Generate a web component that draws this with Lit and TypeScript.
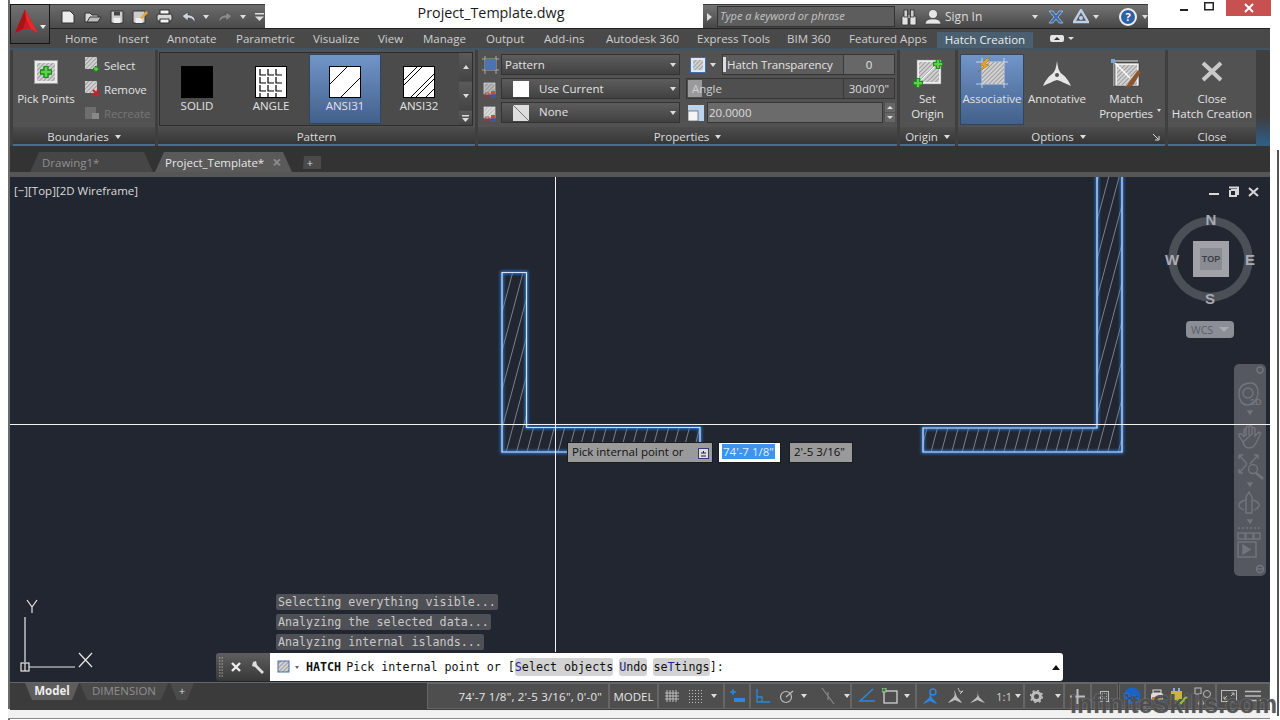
import { LitElement, html, svg, css, unsafeCSS } from "lit";
import { customElement } from "lit/decorators.js";

const FONT = unsafeCSS(`"Open Sans", "Liberation Sans", sans-serif`);
const MONO = unsafeCSS(`"DejaVu Sans Mono", "Liberation Mono", monospace`);

const TABS = [
  { label: "Home", w: 53 },
  { label: "Insert", w: 49 },
  { label: "Annotate", w: 69 },
  { label: "Parametric", w: 77 },
  { label: "Visualize", w: 65 },
  { label: "View", w: 45 },
  { label: "Manage", w: 63 },
  { label: "Output", w: 58 },
  { label: "Add-ins", w: 62 },
  { label: "Autodesk 360", w: 91 },
  { label: "Express Tools", w: 90 },
  { label: "BIM 360", w: 62 },
  { label: "Featured Apps", w: 88 },
];

// hatch lines at 75deg, clipped to the outline they belong to
function hatchLines(x0: number, x1: number, y0: number, y1: number) {
  const lines = [];
  const rise = y1 - y0;
  const run = rise * 0.268;
  for (let x = x0 - run - 10; x < x1; x += 10.4) {
    lines.push(svg`<line x1=${x} y1=${y1} x2=${x + run} y2=${y0}></line>`);
  }
  return lines;
}

const hatchSq = (x: number, y: number, s: number) =>
  svg`<rect x=${x} y=${y} width=${s} height=${s} fill="url(#hp)"></rect>`;

const plus = (x: number, y: number, r: number) => svg`
  <path d="M${x - r} ${y}H${x + r}M${x} ${y - r}V${y + r}" stroke="#1c8a1c" stroke-width=${r * 0.9} fill="none"></path>
  <path d="M${x - r + 1} ${y}H${x + r - 1}M${x} ${y - r + 1}V${y + r - 1}" stroke="#5fd04a" stroke-width=${r * 0.45} fill="none"></path>`;

const ANNOTATIVE = svg`<path d="M15 1C16 8 17 12 20 14C23 16 27 21 29 26C24 24 19 21 15 20C11 21 6 24 1 26C3 21 7 16 10 14C13 12 14 8 15 1Z"></path><circle cx="15" cy="15" r="2" fill="#525252"></circle>`;

@customElement("app-root")
export class AppRoot extends LitElement {
  static styles = css`
    :host {
      display: block;
      width: 1280px;
      height: 720px;
      overflow: hidden;
      font-family: ${FONT};
    }
    svg { display: block; flex: none; }
    .defs { position: absolute; width: 0; height: 0; }
    .frame {
      position: relative;
      width: 1280px;
      height: 720px;
      box-sizing: border-box;
      padding: 0 10px 10px 10px;
      background: #fff;
      display: flex;
      flex-direction: column;
    }
    .frame::before {
      content: "";
      position: absolute;
      left: 8px; top: 0; bottom: 0;
      width: 2px;
      background: #6a6a6a;
    }
    .frame::after {
      content: "";
      position: absolute;
      left: 8px; right: 10px; bottom: 1px;
      height: 9px;
      background: #f1f1f1;
      border-bottom: 1px solid #888;
    }
    .caret {
      flex: none;
      width: 0; height: 0;
      border-left: 3.5px solid transparent;
      border-right: 3.5px solid transparent;
      border-top: 4px solid #ddd;
    }

    /* title bar */
    .titlebar { display: flex; height: 28px; flex: none; }
    .qat {
      margin-top: 4px;
      width: 255px;
      box-sizing: border-box;
      padding-left: 50px;
      display: flex;
      align-items: center;
      background: linear-gradient(#6b6b6b, #4b4b4b);
      border-top: 1px solid #3a3a3a;
    }
    .doc-title {
      width: 438px;
      padding-left: 14px;
      box-sizing: border-box;
      text-align: center;
      font-size: 14.3px;
      line-height: 26px;
      color: #1a1a1a;
    }
    .info {
      margin-top: 4px;
      width: 445px;
      height: 24px;
      display: flex;
      align-items: center;
      background: linear-gradient(#737373, #474747);
      border-top: 1px solid #3a3a3a;
      box-sizing: border-box;
      color: #ddd;
      font-size: 12px;
    }
    .search {
      width: 180px;
      height: 21px;
      margin-left: 1px;
      box-sizing: border-box;
      background: #5d5d5d;
      border: 1px solid #333;
      color: #c4c4c4;
      font-style: italic;
      font-size: 11px;
      line-height: 17px;
      padding-left: 2px;
    }
    .help-q { position: relative; width: 18px; height: 18px; margin-left: 20px; border-radius: 50%; background: #2e62a8; border: 2px solid #f0f0f0; box-sizing: border-box; color: #fff; font-weight: 700; font-size: 11px; line-height: 14px; text-align: center; flex: none; }
    .winctl { flex: 1; display: flex; justify-content: flex-end; height: 16px; }
    .win-btn { width: 25px; height: 16px; display: flex; align-items: center; justify-content: center; }
    .win-close { width: 45px; background: #c75050; margin-left: 5px; margin-right: -1px; }
    .app-btn {
      position: absolute;
      left: 10px; top: 4px;
      width: 40px; height: 40px;
      box-sizing: border-box;
      background: linear-gradient(#707070, #484848);
      border: 1px solid #161616;
    }
    .app-btn .caret { position: absolute; right: 3px; top: 20px; border-top-color: #eee; }

    /* ribbon tabs */
    .tabs {
      height: 20px;
      flex: none;
      background: #494949;
      display: flex;
      padding-left: 55px;
      align-items: center;
      color: #cfcfcf;
      font-size: 11.5px;
      border-top: 1px solid #222;
      box-sizing: border-box;
    }
    .tab { flex: none; white-space: nowrap; }
    .tab-active {
      flex: none;
      width: 96px;
      height: 16px;
      line-height: 15px;
      align-self: flex-end;
      text-align: center;
      color: #eee;
      background: #4a5f6f;
    }
    .tab-min { margin-left: 17px; display: flex; align-items: center; gap: 4px; }

    /* ribbon */
    .ribbon {
      height: 98px;
      flex: none;
      box-sizing: border-box;
      background: #3f3f3f;
      border-top: 2px solid #3f5566;
      display: flex;
      padding-left: 3px;
      gap: 3px;
      color: #e2e2e2;
      font-size: 11.5px;
    }
    .panel { display: flex; flex-direction: column; border-bottom: 2px solid #44708c; height: 94px; flex: none; }
    .panel-body { height: 77px; background: #525252; position: relative; display: flex; box-sizing: border-box; flex: none; }
    .panel-title {
      height: 17px;
      padding-top: 2px;
      box-sizing: border-box;
      background: linear-gradient(#4d4d4d, #363636);
      text-align: center;
      color: #dcdcdc;
      display: flex;
      justify-content: center;
      align-items: center;
      gap: 6px;
      line-height: 15px;
    }
    .w-bound { width: 142px; }
    .w-pattern { width: 317px; }
    .w-props { width: 419px; }
    .w-origin { width: 55px; }
    .w-options { width: 207px; position: relative; }
    .w-close { width: 88px; }
    .launcher { position: absolute; right: 5px; bottom: 3px; }
    .corner { flex: 1; background: linear-gradient(#3f3f3f, #3f3f3f 70%, #2d5f8a); margin-left: -3px; }

    .big { display: flex; flex-direction: column; align-items: center; text-align: center; line-height: 15px; flex: none; box-sizing: border-box; padding-top: 8px; height: 76px; }
    .big svg { margin-bottom: 3px; }
    .big.pick { width: 66px; padding-top: 10px; margin-right: 5px; }
    .big.pick svg { margin-bottom: 7px; }
    .small-col { display: flex; flex-direction: column; padding-top: 8px; gap: 10px; }
    .small { display: flex; align-items: center; gap: 4px; height: 14px; letter-spacing: -0.1px; line-height: 13px; }
    .dim { color: #777; }

    .gallery {
      margin: 2px 2px 1px 1px;
      flex: 1;
      display: flex;
      border: 1px solid #2c2c2c;
      background: #4b4b4b;
    }
    .g-item {
      width: 74px;
      box-sizing: border-box;
      padding-top: 13px;
      display: flex;
      flex-direction: column;
      align-items: center;
      line-height: 15px;
      font-size: 11.5px;
    }
    .g-item.sel {
      background: linear-gradient(#7295c8, #42608b);
      border: 1px solid #2e4660;
      margin: 1px;
      width: 72px;
      padding-top: 11px;
    }
    .g-scroll { margin-left: 3px; width: 13px; display: flex; flex-direction: column; gap: 1px; }
    .g-btn { flex: 28; background: linear-gradient(#5a5a5a, #444); display: flex; align-items: center; justify-content: center; }
    .g-btn.last { flex: 14; }
    .up { border-top: 0; border-bottom: 4px solid #ddd; }

    .p-col1 { width: 198px; margin-left: 4px; padding-top: 4px; display: flex; flex-direction: column; gap: 3px; }
    .p-col2 { width: 209px; margin-left: 6px; padding-top: 4px; display: flex; flex-direction: column; gap: 3px; }
    .p-row { height: 21px; display: flex; align-items: center; line-height: 15px; }
    .drop {
      margin-left: 2px;
      width: 179px;
      height: 21px;
      box-sizing: border-box;
      background: linear-gradient(#5d5d5d, #414141);
      border: 1px solid #333;
      display: flex;
      align-items: center;
      padding: 0 3px;
    }
    .drop .lbl { flex: 1; padding-bottom: 1px; }
    .swatch { width: 16px; height: 16px; margin: 0 10px 0 8px; background: #fff; flex: none; }
    .swatch.none { background: linear-gradient(135deg, #ddd 49%, #777 50%, #777 52%, #ddd 53%); transform: scaleX(-1); }
    .field {
      height: 21px;
      box-sizing: border-box;
      background: #5c5c5c;
      border: 1px solid #363636;
      display: flex;
      align-items: center;
      position: relative;
    }
    .field .val { border-left: 1px solid #3b3b3b; height: 100%; display: flex; align-items: center; justify-content: center; background: #676767; }
    .f-trans { width: 173px; letter-spacing: -0.1px; }
    .handle { width: 3px; height: 15px; background: #ddd; margin: 0 1px 0 0; flex: none; }
    .f-angle { width: 209px; background: #4f4f4f; }
    .angle-handle { position: absolute; left: 1px; top: 1px; bottom: 1px; width: 14px; background: #9a9a9a; }
    .angle-text { position: relative; margin-left: 5px; color: #cfcfcf; }
    .f-scale { width: 176px; margin-left: 3px; background: #6b6b6b; padding-left: 1px; color: #ddd; }
    .spin { width: 10px; margin-left: 2px; display: flex; flex-direction: column; gap: 1px; }
    .spin div { height: 9px; background: #666; display: flex; align-items: center; justify-content: center; }
    .spin .caret { border-left-width: 3px; border-right-width: 3px; border-top-width: 3px; height: 0; background: none; }
    .spin .up { border-bottom-width: 3px; }
    .assoc {
      width: 64px;
      height: 71px;
      margin: 4px 0 0 2px;
      box-sizing: border-box;
      background: linear-gradient(#7295c8, #42608b);
      border: 1px solid #2e4660;
      padding-top: 3px !important;
      white-space: nowrap;
    }
    .big.anno { width: 66px; padding-top: 10px; }
    .big.match { width: 74px; margin-left: -1px; }
    .big.closeb { width: 88px; padding-top: 10px; }
    .big.closeb svg { margin-bottom: 7px; }
    .big.origin { width: 55px; }
    .match-lbl { position: relative; letter-spacing: -0.2px; }
    .tiny { position: absolute; right: -8px; top: 3px; border-left-width: 2.5px; border-right-width: 2.5px; border-top-width: 3px; }

    /* file tabs */
    .filetabs {
      height: 26px;
      flex: none;
      background: #333;
      display: flex;
      align-items: flex-end;
      padding-left: 20px;
      box-sizing: border-box;
      font-size: 11.5px;
    }
    .ftab {
      height: 20px;
      display: flex;
      align-items: center;
      flex: none;
      box-sizing: border-box;
      clip-path: polygon(9px 0, calc(100% - 9px) 0, 100% 100%, 0 100%);
      line-height: 15px;
    }
    .ftab.off { width: 123px; background: #464646; color: #8f8f8f; padding-left: 12px; margin-right: 2px; }
    .ftab.on { width: 137px; background: #5a5a5a; color: #e6e6e6; padding-left: 10px; gap: 8px; }
    .ftab-x { color: #8c8c8c; font-size: 16px; font-weight: 700; }
    .ftab.add { width: 22px; height: 13px; margin: 0 0 3px 7px; background: #4a4a4a; color: #ddd; justify-content: center; font-size: 11px; clip-path: polygon(5px 0, 100% 0, 100% 100%, 4px 100%); }
    .filetabs-end { height: 5px; flex: none; background: #565656; }

    /* canvas */
    .canvas { position: relative; height: 505px; flex: none; background: #212630; }
    .canvas > svg { position: absolute; left: 0; top: 0; }
    .vp-label { position: absolute; left: 4px; top: 6px; font-size: 11.5px; color: #dcdcdc; }
    .wcs {
      position: absolute;
      left: 1176px; top: 144px;
      width: 48px; height: 17px;
      box-sizing: border-box;
      border-radius: 4px;
      background: #8b8e95;
      color: #5c5f66;
      font-size: 10.5px;
      display: flex;
      align-items: center;
      padding-left: 5px;
      gap: 6px;
    }
    .wcs .caret { border-top-color: #a9abb0; border-left-width: 5px; border-right-width: 5px; border-top-width: 5px; }
    .navbar {
      position: absolute;
      left: 1224px; top: 187px;
      width: 32px; height: 212px;
      border-radius: 5px;
      background: #55585f;
    }
    .tip {
      position: absolute;
      top: 265px;
      height: 21px;
      box-sizing: border-box;
      border: 1px solid #1c1c1c;
      background: #9a9a9a;
      color: #111;
      font-size: 11.5px;
      display: flex;
      align-items: center;
      padding: 0 0 3px 4px;
      line-height: 15px;
    }
    .tip-prompt { left: 557px; width: 146px; }
    .tip-x { left: 708px; width: 63px; background: #fff; padding-left: 3px; }
    .tip-x span { background: #3d93ee; color: #dfeeff; padding: 0 1px; }
    .tip-y { left: 779px; width: 64px; }
    .tip-more { position: absolute; right: 3px; top: 5px; }
    .msg {
      position: absolute;
      left: 266px;
      height: 16px;
      padding: 0 2px;
      border-radius: 2px;
      background: #4e5056;
      color: #c9c9c9;
      font: 11.68px/16px ${MONO};
      white-space: pre;
    }
    .cmd {
      position: absolute;
      left: 206px; top: 476px;
      width: 847px; height: 28px;
      display: flex;
      border-radius: 3px;
      overflow: hidden;
    }
    .cmd-left {
      width: 54px;
      flex: none;
      background: linear-gradient(#5e5e5e, #383838);
      display: flex;
      align-items: center;
      padding-left: 3px;
      box-sizing: border-box;
    }
    .cmd-x { margin-left: 8px; }
    .cmd-wrench { margin-left: 10px; }
    .cmd-main {
      flex: 1;
      background: #fff;
      display: flex;
      align-items: center;
      padding-left: 7px;
      font: 11.68px ${MONO};
      color: #111;
      white-space: pre;
    }
    .cmd-main b { margin-right: -2px; }
    .opt { background: #d3d3d3; border-radius: 3px; padding: 2px 0; }
    .opt + .opt { margin-left: -1px; }
    .opt i { font-style: normal; color: #24248a; }
    .cmd-up { margin-left: auto; margin-right: 3px; border-top: 0; border-bottom: 5px solid #111; border-left-width: 4px; border-right-width: 4px; }

    /* status bar */
    .status {
      height: 28px;
      flex: none;
      background: #3b3b3b;
      display: flex;
      box-sizing: border-box;
      border-top: 1px solid #666;
      position: relative;
      z-index: 1;
    }
    .layouts { width: 417px; display: flex; padding-left: 15px; align-items: flex-start; font-size: 11.5px; flex: none; box-sizing: border-box; }
    .ltab { height: 17px; line-height: 16px; flex: none; text-align: center; clip-path: polygon(0 0, 100% 0, calc(100% - 7px) 100%, 7px 100%); }
    .ltab.on { width: 54px; background: #5d5d5d; font-weight: 700; color: #eee; }
    .ltab.off { width: 88px; background: #4a4a4a; color: #8f8f8f; margin-left: 1px; }
    .ltab.add { width: 24px; background: #4a4a4a; color: #ddd; margin-left: 2px; }
    .cell {
      height: 26px;
      box-sizing: border-box;
      background: #4e4e4e;
      border: 1px solid #666;
      color: #e6e6e6;
      font-size: 11.5px;
      display: flex;
      align-items: center;
      justify-content: center;
      gap: 5px;
      flex: none;
    }
    .coords { width: 182px; justify-content: flex-end; padding-right: 6px; letter-spacing: 0.2px; }
    .watermark {
      position: absolute;
      left: 1070px; top: 690px;
      font: 700 25.2px "Liberation Sans", sans-serif;
      color: rgba(66, 66, 66, 0.85);
      text-shadow: 0 0 2px rgba(190, 190, 190, 0.6);
      white-space: nowrap;
      z-index: 2;
    }
    .edge { position: absolute; left: 1277px; top: 150px; bottom: 4px; width: 2px; background: #555; }
  `;

  render() {
    return html`
      <svg class="defs">
        <defs>
          <pattern id="hp" width="3" height="3" patternUnits="userSpaceOnUse" patternTransform="rotate(45)">
            <rect width="3" height="3" fill="#d2d2d2"></rect>
            <rect width="1" height="3" fill="#9c9c9c"></rect>
          </pattern>
        </defs>
      </svg>
      <div class="frame">
        ${this.titleBar()} ${this.tabsRow()} ${this.ribbon()} ${this.fileTabs()} ${this.canvas()} ${this.statusBar()}
        <div class="edge"></div>
        <div class="watermark">InfiniteSkills.com</div>
      </div>
    `;
  }

  titleBar() {
    const fold = "#d8d8d8";
    return html`
      <div class="titlebar">
        <div class="qat">
          <svg width="16" height="14" style="margin-right:8px"><path d="M2 1H10L14 5V13H2Z" fill="#ececec" stroke="#333"></path></svg>
          <svg width="18" height="14" style="margin-right:8px"><path d="M1 3H6L8 5H14V12H1Z" fill=${fold} stroke="#333"></path><path d="M3 12L6 7H17L14 12Z" fill="#bbb" stroke="#333"></path></svg>
          <svg width="14" height="14" style="margin-right:8px"><path d="M1 1H13V13H1Z" fill="#ccc" stroke="#333"></path><rect x="4" y="1.5" width="6" height="4" fill="#444"></rect><rect x="3.5" y="8" width="7" height="5" fill="#eee"></rect></svg>
          <svg width="16" height="14" style="margin-right:8px"><path d="M1 1H13V13H1Z" fill="#ccc" stroke="#333"></path><rect x="3.5" y="8" width="7" height="5" fill="#eee"></rect><path d="M8 8L14 1L16 3L10 9Z" fill="#e2a93a"></path></svg>
          <svg width="17" height="15" style="margin-right:8px"><rect x="1" y="5" width="15" height="7" rx="2" fill="#d8d8d8" stroke="#333"></rect><rect x="4" y="1" width="9" height="4" fill="#f3f3f3" stroke="#333"></rect><rect x="4" y="10" width="9" height="4" fill="#f3f3f3" stroke="#333"></rect></svg>
          <svg width="15" height="12"><path d="M1 5L7 1V4C11 4 14 6 14 10L13 11C12 8 10 7 7 7V10Z" fill="#cfd3da" stroke="#333" stroke-width=".6"></path></svg>
          <div class="caret" style="margin:0 9px 0 7px"></div>
          <svg width="15" height="12"><path d="M14 5L8 1V4C4 4 1 6 1 10L2 11C3 8 5 7 8 7V10Z" fill="#8a8a8a" stroke="#444" stroke-width=".6"></path></svg>
          <div class="caret" style="margin:0 9px 0 7px"></div>
          <svg width="9" height="8"><path d="M0 0H9V1.5H0ZM0 3.5H9L4.5 8Z" fill="#ddd"></path></svg>
        </div>
        <div class="doc-title">Project_Template.dwg</div>
        <div class="info">
          <svg width="13" height="22" style="flex:none"><path d="M4 7L9 11L4 15Z" fill="#ddd"></path></svg>
          <div class="search">Type a keyword or phrase</div>
          <svg width="18" height="18" style="margin-left:5px">
            <rect x="2" y="8" width="6" height="9" rx="1.5" fill="#e2e2e2" stroke="#222" stroke-width=".7"></rect>
            <rect x="10" y="8" width="6" height="9" rx="1.5" fill="#e2e2e2" stroke="#222" stroke-width=".7"></rect>
            <rect x="4" y="2" width="3.5" height="7" fill="#cfcfcf" stroke="#222" stroke-width=".7"></rect>
            <rect x="10.5" y="2" width="3.5" height="7" fill="#cfcfcf" stroke="#222" stroke-width=".7"></rect>
            <rect x="8" y="7" width="2" height="3" fill="#999"></rect>
          </svg>
          <svg width="20" height="18" style="margin-left:5px"><circle cx="10" cy="6" r="4.5" fill="#e6e6e6" stroke="#333" stroke-width=".6"></circle><path d="M2 16C3 11 7 11 10 11C13 11 17 11 18 16Z" fill="#e6e6e6" stroke="#333" stroke-width=".6"></path></svg>
          <span style="margin-left:2px;width:87px;flex:none">Sign In</span>
          <div class="caret"></div>
          <svg width="16" height="14" style="margin-left:10px"><path d="M1 1H5L8 5L11 1H15L10 7L15 13H11L8 9L5 13H1L6 7Z" fill="#3d6fb0" stroke="#b8cbe3" stroke-width=".7"></path></svg>
          <svg width="16" height="15" style="margin-left:9px"><path d="M8 1L15 13H1Z" fill="none" stroke="#bcd0ea" stroke-width="2.4"></path><circle cx="8" cy="9" r="2" fill="#bcd0ea"></circle></svg>
          <div class="caret" style="margin-left:4px"></div>
          <div class="help-q">?</div>
          <div class="caret" style="margin-left:5px"></div>
        </div>
        <div class="winctl">
          <div class="win-btn"><svg width="8" height="8"><rect y="5" width="8" height="2" fill="#222"></rect></svg></div>
          <div class="win-btn"><svg width="14" height="12"><rect x="2.75" y=".75" width="8.5" height="7" fill="none" stroke="#222" stroke-width="1.5"></rect></svg></div>
          <div class="win-btn win-close"><svg width="10" height="10"><path d="M1 1L9 9M9 1L1 9" stroke="#fff" stroke-width="2"></path></svg></div>
        </div>
      </div>
      <div class="app-btn">
        <svg width="38" height="38">
          <path d="M14 4.5L27 28L20 24H12L4 28Z" fill="#cc1a20"></path>
          <path d="M14 4.5L4 28L12 24L15 14Z" fill="#a81318"></path>
          <path d="M14 4.5L15 14L20 24L27 28Z" fill="#e52a2e"></path>
        </svg>
        <div class="caret"></div>
      </div>
    `;
  }

  tabsRow() {
    return html`
      <div class="tabs">
        ${TABS.map((t) => html`<div class="tab" style="width:${t.w}px">${t.label}</div>`)}
        <div class="tab-active">Hatch Creation</div>
        <div class="tab-min">
          <svg width="14" height="7"><rect width="14" height="7" rx="2" fill="#e4e4e4"></rect><path d="M4 5H10L7 2Z" fill="#333"></path></svg>
          <div class="caret" style="border-left-width:3px;border-right-width:3px;border-top-width:3px"></div>
        </div>
      </div>
    `;
  }

  ribbon() {
    return html`
      <div class="ribbon">
        ${this.boundaries()} ${this.pattern()} ${this.properties()} ${this.origin()} ${this.options()} ${this.closePanel()}
        <div class="corner"></div>
      </div>
    `;
  }

  boundaries() {
    return html`
      <div class="panel w-bound">
        <div class="panel-body">
          <div class="big pick">
            <svg width="24" height="24"><rect x=".5" y=".5" width="23" height="23" fill="#ececec" stroke="#999"></rect>${hatchSq(3, 3, 18)}${plus(12, 12, 6)}</svg>
            Pick Points
          </div>
          <div class="small-col">
            <div class="small"><svg width="16" height="16">${hatchSq(1, 0, 12)}${plus(12, 12, 3)}</svg>Select</div>
            <div class="small"><svg width="16" height="16">${hatchSq(1, 0, 12)}<path d="M9 9L15 15M15 9L9 15" stroke="#c22" stroke-width="2"></path></svg>Remove</div>
            <div class="small dim"><svg width="16" height="16"><rect x="1" y="2" width="11" height="12" fill="#6e6e6e"></rect><rect x="8" y="8" width="7" height="6" fill="#888"></rect></svg>Recreate</div>
          </div>
        </div>
        <div class="panel-title">Boundaries <div class="caret"></div></div>
      </div>
    `;
  }

  pattern() {
    return html`
      <div class="panel w-pattern">
        <div class="panel-body">
          <div class="gallery">
            <div class="g-item"><svg width="32" height="32"><rect width="32" height="32" fill="#000"></rect></svg>SOLID</div>
            <div class="g-item">
              <svg width="32" height="32">
                <rect x=".5" y=".5" width="31" height="31" fill="#fff" stroke="#000"></rect>
                <path d="M5 3V9H11M13 3V9H19M21 3V9H27M5 11V17H11M13 11V17H19M21 11V17H27M5 19V25H11M13 19V25H19M21 19V25H27M5 27V31M13 27V31M21 27V31" fill="none" stroke="#000" stroke-width="1.2"></path>
              </svg>
              ANGLE
            </div>
            <div class="g-item sel">
              <svg width="32" height="32">
                <rect x=".5" y=".5" width="31" height="31" fill="#fff" stroke="#000"></rect>
                <path d="M1 18L18 1M12 31L31 12" stroke="#000" stroke-width="1"></path>
              </svg>
              ANSI31
            </div>
            <div class="g-item">
              <svg width="32" height="32">
                <rect x=".5" y=".5" width="31" height="31" fill="#fff" stroke="#000"></rect>
                <path d="M1 14L14 1M1 19L19 1M8 31L31 8M13 31L31 13M23 31L31 23" stroke="#000" stroke-width="1"></path>
              </svg>
              ANSI32
            </div>
            <div class="g-scroll">
              <div class="g-btn"><div class="caret up"></div></div>
              <div class="g-btn"><div class="caret"></div></div>
              <div class="g-btn last"><svg width="7" height="7"><path d="M0 0H7V1.5H0ZM0 3H7L3.5 7Z" fill="#ddd"></path></svg></div>
            </div>
          </div>
        </div>
        <div class="panel-title">Pattern</div>
      </div>
    `;
  }

  propIcon(c: string) {
    return html`<svg width="16" height="18">
      ${hatchSq(2, 3, 11)}
      <rect x="2" y="3" width="11" height="11" fill=${c} fill-opacity=".35" stroke="#ddd" stroke-width=".7"></rect>
      <rect x="9" y="11" width="4" height="4" fill="#c0532b"></rect>
      <rect x="3" y="13" width="4" height="4" fill="none" stroke="#a33" stroke-width=".8"></rect>
      <rect x="9" y="14" width="4" height="3" fill="none" stroke="#36c" stroke-width=".8"></rect>
    </svg>`;
  }

  properties() {
    return html`
      <div class="panel w-props">
        <div class="panel-body">
          <div class="p-col1">
            <div class="p-row">
              <svg width="17" height="18"><path d="M3 0V18M14 0V18M0 3H17M0 14H17" stroke="#ccc" stroke-width=".7"></path><rect x="3" y="3" width="11" height="11" fill="#4d74ad"></rect></svg>
              <div class="drop"><span class="lbl">Pattern</span><div class="caret"></div></div>
            </div>
            <div class="p-row">
              ${this.propIcon("#888")}
              <div class="drop" style="margin-left:3px"><div class="swatch"></div><span class="lbl">Use Current</span><div class="caret"></div></div>
            </div>
            <div class="p-row">
              ${this.propIcon("#eee")}
              <div class="drop" style="margin-left:3px"><div class="swatch none"></div><span class="lbl" style="padding-bottom:2px">None</span><div class="caret"></div></div>
            </div>
          </div>
          <div class="p-col2">
            <div class="p-row">
              <svg width="16" height="16" style="margin-left:4px"><rect x=".5" y=".5" width="15" height="15" fill="#dfe8f5" stroke="#3a6fb5"></rect>${hatchSq(3, 3, 10)}</svg>
              <div class="caret" style="margin:0 6px 0 4px;border-left-width:3px;border-right-width:3px"></div>
              <div class="field f-trans"><div class="handle"></div><span style="flex:1">Hatch Transparency</span><div class="val" style="width:50px">0</div></div>
            </div>
            <div class="p-row">
              <div class="field f-angle">
                <div class="angle-handle"></div>
                <span class="angle-text" style="flex:1">Angle</span>
                <div class="val" style="width:50px;background:#4f4f4f;color:#ddd">30d0'0"</div>
              </div>
            </div>
            <div class="p-row">
              <svg width="16" height="16" style="margin-left:2px"><rect width="16" height="16" fill="#bcd4ee"></rect><rect x="0" y="6" width="10" height="10" fill="#f5f5f5" stroke="#3a3a3a" stroke-width=".6"></rect></svg>
              <div class="field f-scale">20.0000</div>
              <div class="spin"><div><div class="caret up"></div></div><div><div class="caret"></div></div></div>
            </div>
          </div>
        </div>
        <div class="panel-title">Properties <div class="caret"></div></div>
      </div>
    `;
  }

  origin() {
    return html`
      <div class="panel w-origin">
        <div class="panel-body">
          <div class="big origin">
            <svg width="32" height="30">
              <rect x="5" y="2" width="24" height="24" fill="#eee" stroke="#888" stroke-width=".5"></rect>
              ${hatchSq(7, 4, 20)}
              <path d="M7 24L26 5" stroke="#fff" stroke-width="1"></path>
              ${plus(26, 6, 5)}${plus(6, 25, 5)}
            </svg>
            <span>Set<br />Origin</span>
          </div>
        </div>
        <div class="panel-title">Origin <div class="caret"></div></div>
      </div>
    `;
  }

  options() {
    return html`
      <div class="panel w-options">
        <div class="panel-body">
          <div class="big assoc">
            <svg width="32" height="30">
              <path d="M6 0V30M28 0V30M0 4H32M0 26H32" stroke="#dce6f2" stroke-width=".8"></path>
              ${hatchSq(6, 4, 22)}
              <path d="M11 0L4 7L8 8L2 14L13 7L9 6L14 1Z" fill="#e8a52a" stroke="#7a5a18" stroke-width=".4"></path>
            </svg>
            Associative
          </div>
          <div class="big anno">
            <svg width="30" height="28" fill="#e6e6e6">${ANNOTATIVE}</svg>
            Annotative
          </div>
          <div class="big match">
            <svg width="32" height="30">
              <path d="M4 3H28M4 3V28" stroke="#ddd" stroke-width="1"></path>
              <rect x="1" y="1" width="4" height="4" fill="#7aa7dd"></rect>
              <rect x="5" y="5" width="24" height="23" fill="#f0f0f0" stroke="#333" stroke-width=".6"></rect>
              ${hatchSq(7, 7, 20)}
              <path d="M5 5L20 20" stroke="#fff" stroke-width="1.4"></path>
              <path d="M19 24L28 12L31 14L24 26C22 29 17 29 14 29C17 28 18 26 19 24Z" fill="#8a5630"></path>
            </svg>
            <span>Match</span>
            <span class="match-lbl">Properties<span class="caret tiny"></span></span>
          </div>
        </div>
        <div class="panel-title" style="padding-right:6px">Options <div class="caret"></div></div>
        <svg class="launcher" width="7" height="7"><path d="M0 0L5 5M6 2V6H2" fill="none" stroke="#ddd"></path></svg>
      </div>
    `;
  }

  closePanel() {
    return html`
      <div class="panel w-close">
        <div class="panel-body">
          <div class="big closeb">
            <svg width="24" height="24"><path d="M3 3L21 20M21 3L3 20" stroke="#c9c9c9" stroke-width="4"></path></svg>
            <span>Close<br />Hatch Creation</span>
          </div>
        </div>
        <div class="panel-title">Close</div>
      </div>
    `;
  }

  fileTabs() {
    return html`
      <div class="filetabs">
        <div class="ftab off">Drawing1*</div>
        <div class="ftab on">Project_Template* <span class="ftab-x">×</span></div>
        <div class="ftab add">+</div>
      </div>
      <div class="filetabs-end"></div>
    `;
  }

  canvas() {
    const L = "502,272.5 526.5,272.5 526.5,427.5 700,427.5 700,452 502,452";
    const R = "1097,170 1097,428 923,428 923,452 1122,452 1122,170";
    return html`
      <div class="canvas">
        <svg width="1260" height="505" viewBox="10 177 1260 505">
          <defs>
            <clipPath id="cl"><polygon points=${L}></polygon></clipPath>
            <clipPath id="cr"><polygon points=${R}></polygon></clipPath>
            <filter id="glow" x="-10%" y="-10%" width="120%" height="120%"><feGaussianBlur stdDeviation="1.4"></feGaussianBlur></filter>
          </defs>
          <g stroke="#868b95" stroke-width=".9">
            <g clip-path="url(#cl)">${hatchLines(502, 700, 272, 452)}</g>
            <g clip-path="url(#cr)">${hatchLines(923, 1122, 170, 452)}</g>
          </g>
          <g fill="none">
            <g stroke="#2f7be0" stroke-width="3" filter="url(#glow)">
              <polygon points=${L}></polygon>
              <polygon points=${R}></polygon>
            </g>
            <g stroke="#cfe3fb" stroke-width="1.2">
              <polygon points=${L}></polygon>
              <polygon points=${R}></polygon>
            </g>
          </g>
          <!-- ucs icon -->
          <g fill="none" stroke="#e8e8e8" stroke-width="1.2">
            <path d="M25 617V662M29 667H75"></path>
            <rect x="21" y="663" width="8" height="8"></rect>
            <path d="M25 663V671M79 653L92 667M92 653L79 667"></path>
            <path d="M27 600L32 607L37 600M32 607V613"></path>
          </g>
          <!-- view cube -->
          <circle cx="1210.5" cy="259" r="38" fill="none" stroke="#4b4f58" stroke-width="8.5"></circle>
          <rect x="1193" y="241" width="36" height="36" fill="#a0a2a8"></rect>
          <rect x="1200" y="248" width="22" height="22" fill="#8a8c93"></rect>
          <g font-family="Liberation Sans, sans-serif" font-weight="700" fill="#a8abb1" font-size="15" text-anchor="middle">
            <text x="1211" y="225">N</text>
            <text x="1210" y="304">S</text>
            <text x="1250" y="265">E</text>
            <text x="1172" y="265">W</text>
            <text x="1211" y="262" font-size="9" fill="#3e4149">TOP</text>
          </g>
          <!-- viewport controls -->
          <g fill="none" stroke="#d8d8d8" stroke-width="2">
            <path d="M1209 194H1219"></path>
            <path d="M1229 187.5H1238V195M1231 190H1236V196H1230V190"></path>
            <path d="M1249 188L1258 196M1258 188L1249 196"></path>
          </g>
        </svg>
        <div class="vp-label">[−][Top][2D Wireframe]</div>
        <div class="wcs">WCS <div class="caret"></div></div>
        <div class="navbar">${this.navIcons()}</div>
        <svg width="1260" height="505" viewBox="10 177 1260 505" style="pointer-events:none">
          <path d="M10 424.5H1270M555.5 177V652" stroke="#f2f2f2" stroke-width="1"></path>
        </svg>
        <div class="tip tip-prompt">Pick internal point or
          <svg class="tip-more" width="11" height="11"><rect x=".5" y=".5" width="10" height="10" fill="#ddd" stroke="#3a3a80"></rect><path d="M3 5H8M5.5 3V5M3 8H8" stroke="#222"></path></svg>
        </div>
        <div class="tip tip-x"><span>74'-7 1/8"</span></div>
        <div class="tip tip-y">2'-5 3/16"</div>
        <div class="msg" style="top:417px">Selecting everything visible...</div>
        <div class="msg" style="top:437px">Analyzing the selected data...</div>
        <div class="msg" style="top:457px">Analyzing internal islands...</div>
        <div class="cmd">
          <div class="cmd-left">
            <svg width="4" height="20"><path d="M0 1H4M0 4H4M0 7H4M0 10H4M0 13H4M0 16H4M0 19H4" stroke="#aaa" stroke-dasharray="1.5 1"></path></svg>
            <svg class="cmd-x" width="10" height="10"><path d="M1 1L9 9M9 1L1 9" stroke="#eee" stroke-width="2.4"></path></svg>
            <svg class="cmd-wrench" width="14" height="14"><path d="M2 2L5 1L6 5L13 12L11 14L4 7L1 6Z" fill="#ddd"></path></svg>
          </div>
          <div class="cmd-main">
            <svg width="14" height="14"><rect x="1" y="1" width="11" height="11" fill="url(#hp)" stroke="#4a6ca8"></rect></svg>
            <div class="caret" style="margin:0 7px 0 4px;border-top-color:#666;border-left-width:2.5px;border-right-width:2.5px;border-top-width:3px"></div>
            <span><b>HATCH</b> Pick internal point or [<span class="opt"><i>S</i>elect objects</span> <span class="opt"><i>U</i>ndo</span> <span class="opt">se<i>T</i>tings</span>]:</span>
            <div class="caret cmd-up"></div>
          </div>
        </div>
      </div>
    `;
  }

  navIcons() {
    return html`<svg width="32" height="212" fill="none" stroke="#72757c" stroke-width="1.4">
      <circle cx="26" cy="6" r="3"></circle>
      <path d="M5 30C5 22 10 19 17 19C22 19 24 24 24 28C24 36 19 41 13 41C8 41 5 36 5 30Z"></path>
      <circle cx="14" cy="29" r="5"></circle>
      <text x="16" y="41" font-family="Liberation Sans" font-size="9" font-weight="700" fill="#72757c" stroke="none">2D</text>
      <path d="M14 47H18L16 50Z" fill="#72757c"></path>
      <path d="M9 78C6 73 4 72 5 70C7 69 9 71 10 73V66C10 64 12 64 12 66V72M12 70V64C12 62 15 62 15 64V71M15 70V63C15 61 18 61 18 63V71M18 70V65C18 63 21 63 21 65V72L25 68C27 68 27 70 26 71L22 79C20 83 18 84 15 84C12 84 10 82 9 78Z"></path>
      <path d="M5 91L13 100M24 91L16 100M5 109L13 100M5 91H9M5 91V95M24 91H20M24 91V95M5 109H9M5 109V105"></path>
      <circle cx="19" cy="105" r="4.5"></circle><path d="M22 109L29 115" stroke-width="2.4"></path>
      <path d="M14 119H18L16 122Z" fill="#72757c"></path>
      <path d="M12 133L15 128L18 133M12 133V149H18V133"></path>
      <path d="M11 136C3 139 3 143 10 146M19 136C27 139 27 143 20 146"></path>
      <path d="M14 156H18L16 159Z" fill="#72757c"></path>
      <path d="M4 164H27" stroke-dasharray="2 2"></path>
      <rect x="4" y="169" width="7" height="6"></rect><rect x="12" y="169" width="7" height="6"></rect><rect x="20" y="169" width="6" height="6"></rect>
      <rect x="4" y="178" width="18" height="15"></rect><path d="M9 181L16 185.5L9 190Z" fill="#72757c"></path>
      <circle cx="26" cy="205" r="3.5"></circle><path d="M22.5 205H29.5"></path>
    </svg>`;
  }

  statusBar() {
    const blue = "#2f86e0";
    const grey = "#bdbdbd";
    return html`
      <div class="status">
        <div class="layouts">
          <div class="ltab on">Model</div>
          <div class="ltab off">DIMENSION</div>
          <div class="ltab add">+</div>
        </div>
        <div class="cell coords">74'-7 1/8", 2'-5 3/16", 0'-0"</div>
        <div class="cell" style="width:49px">MODEL</div>
        <div class="cell" style="width:66px;gap:9px">
          <svg width="14" height="14" stroke=${grey} stroke-width="1"><path d="M2 1V13M5 1V13M8 1V13M11 1V13M0 4H14M0 7H14M0 10H14"></path></svg>
          <svg width="14" height="14" fill=${grey}><path d="M1 1h1v1H1zM4 1h1v1H4zM7 1h1v1H7zM10 1h1v1h-1zM13 1h1v1h-1zM1 4h1v1H1zM4 4h1v1H4zM7 4h1v1H7zM10 4h1v1h-1zM13 4h1v1h-1zM1 7h1v1H1zM4 7h1v1H4zM7 7h1v1H7zM10 7h1v1h-1zM13 7h1v1h-1zM1 10h1v1H1zM4 10h1v1H4zM7 10h1v1H7zM10 10h1v1h-1zM13 10h1v1h-1zM1 13h1v1H1zM4 13h1v1H4zM7 13h1v1H7zM10 13h1v1h-1zM13 13h1v1h-1z"></path></svg>
          <div class="caret"></div>
        </div>
        <div class="cell" style="width:26px"><svg width="18" height="16"><path d="M5 1V7M2 4H8" stroke=${blue} stroke-width="1.5"></path><rect x="6" y="10" width="11" height="4" fill=${blue}></rect></svg></div>
        <div class="cell" style="width:101px;gap:7px;justify-content:flex-start;padding-left:4px">
          <svg width="16" height="16" fill="none" stroke=${blue} stroke-width="1.3"><path d="M2 1V14H15M2 9H7V14"></path></svg>
          <svg width="16" height="16" fill="none" stroke=${grey} stroke-width="1.2"><circle cx="8" cy="9" r="5.5"></circle><path d="M8 9L15 3"></path></svg>
          <div class="caret"></div>
          <svg width="18" height="18" fill="none" stroke="#888" stroke-width="1.2" style="margin-left:5px"><path d="M3 1L15 17M9 5V13"></path></svg>
          <div class="caret"></div>
        </div>
        <div class="cell" style="width:65px;gap:6px">
          <svg width="18" height="16" fill="none" stroke=${blue} stroke-width="1.5"><path d="M15 1L2 13H17"></path></svg>
          <svg width="16" height="16" fill="none" stroke="#ddd" stroke-width="1.2"><rect x="2" y="3" width="13" height="12"></rect><rect x="0" y="0" width="4" height="4" fill="#3e7b3e" stroke="#bfe8bf" stroke-width=".7"></rect></svg>
          <div class="caret"></div>
        </div>
        <div class="cell" style="width:108px;gap:5px;justify-content:flex-start;padding-left:4px">
          <svg width="20" height="18" fill=${blue}><path d="M8 4C9 8 9 10 7 12C5 14 3 15 2 17C5 16 7 15 9 14C11 15 13 16 16 17C15 15 13 13 11 11C10 9 10 7 8 4Z"></path><circle cx="12" cy="5" r="3" fill="none" stroke=${blue} stroke-width="1.4"></circle></svg>
          <svg width="18" height="18" fill=${grey}><path d="M8 3C9 7 9 9 7 11C5 13 3 14 2 16C5 15 7 14 9 13C11 14 13 15 16 16C15 14 13 12 11 10C10 8 10 6 8 3Z"></path><path d="M12 1L14 5L17 4L14 7" fill="none" stroke=${grey}></path></svg>
          <svg width="17" height="18" fill=${grey}><path d="M8 3C9 7 9 9 7 11C5 13 3 14 1 16C4 15 7 14 8.5 13C10 14 13 15 16 16C14 14 12 12 10 10C9 8 9 6 8 3Z"></path></svg>
          <span style="margin-left:5px;color:#ccc">1:1</span>
          <div class="caret" style="margin-left:-2px"></div>
        </div>
        <div class="cell" style="width:40px;justify-content:flex-start;padding-left:5px;gap:12px">
          <svg width="13" height="13"><circle cx="6.5" cy="6.5" r="4" fill="none" stroke=${grey} stroke-width="3"></circle><circle cx="6.5" cy="6.5" r="6" fill="none" stroke=${grey} stroke-width="1.6" stroke-dasharray="2 2.7"></circle></svg>
          <div class="caret"></div>
        </div>
        <div class="cell" style="width:27px"><svg width="15" height="15"><path d="M7.5 0V15M0 7.5H15" stroke=${grey} stroke-width="2"></path></svg></div>
        <div class="cell" style="width:27px"><svg width="9" height="11"><rect x=".5" y=".5" width="8" height="10" fill="none" stroke=${grey}></rect><path d="M2 3H7M2 5.5H7M2 8H7" stroke=${grey} stroke-dasharray="1 1"></path></svg></div>
        <div class="cell" style="width:26px;margin-left:1px"><svg width="18" height="18"><circle cx="9" cy="9" r="8.5" fill="#1a62c4"></circle><path d="M4 10C6 12 8 12 9 10C11 12 13 12 14 9" fill="none" stroke="#0f3f86" stroke-width="1.2"></path></svg></div>
        <div class="cell" style="width:71px;gap:6px">
          <svg width="14" height="14"><rect x="1" y="4" width="12" height="7" rx="2" fill="#ddd"></rect><rect x="3" y="1" width="8" height="3" fill="none" stroke="#ddd"></rect><rect x="2" y="8" width="10" height="3" fill="#c67a2a"></rect></svg>
          <svg width="18" height="18"><rect x="1" y="4" width="11" height="9" fill="#cdb43a"></rect><path d="M4 4V1M9 4V1" stroke="#7fb2e8" stroke-width="2"></path><path d="M7 12L11 16L17 9" fill="none" stroke="#8fbf2a" stroke-width="2.4"></path></svg>
          <svg width="18" height="18" fill="none" stroke=${grey}><rect x="1" y="1" width="6" height="6"></rect><circle cx="13" cy="7" r="3.5"></circle><path d="M7 11L10 17H4Z"></path></svg>
        </div>
        <div class="cell" style="flex:1;gap:8px;justify-content:flex-start;padding-left:4px">
          <svg width="16" height="12"><rect x=".5" y=".5" width="15" height="11" fill="none" stroke=${grey}></rect><path d="M3 9L6 6M3 9H5.5M3 9V6.5M13 3L10 6M13 3H10.5M13 3V5.5" stroke=${grey}></path></svg>
          <svg width="16" height="12"><path d="M0 1.5H16M0 6H16M0 10.5H16" stroke=${grey} stroke-width="1.6"></path></svg>
        </div>
      </div>
    `;
  }
}
